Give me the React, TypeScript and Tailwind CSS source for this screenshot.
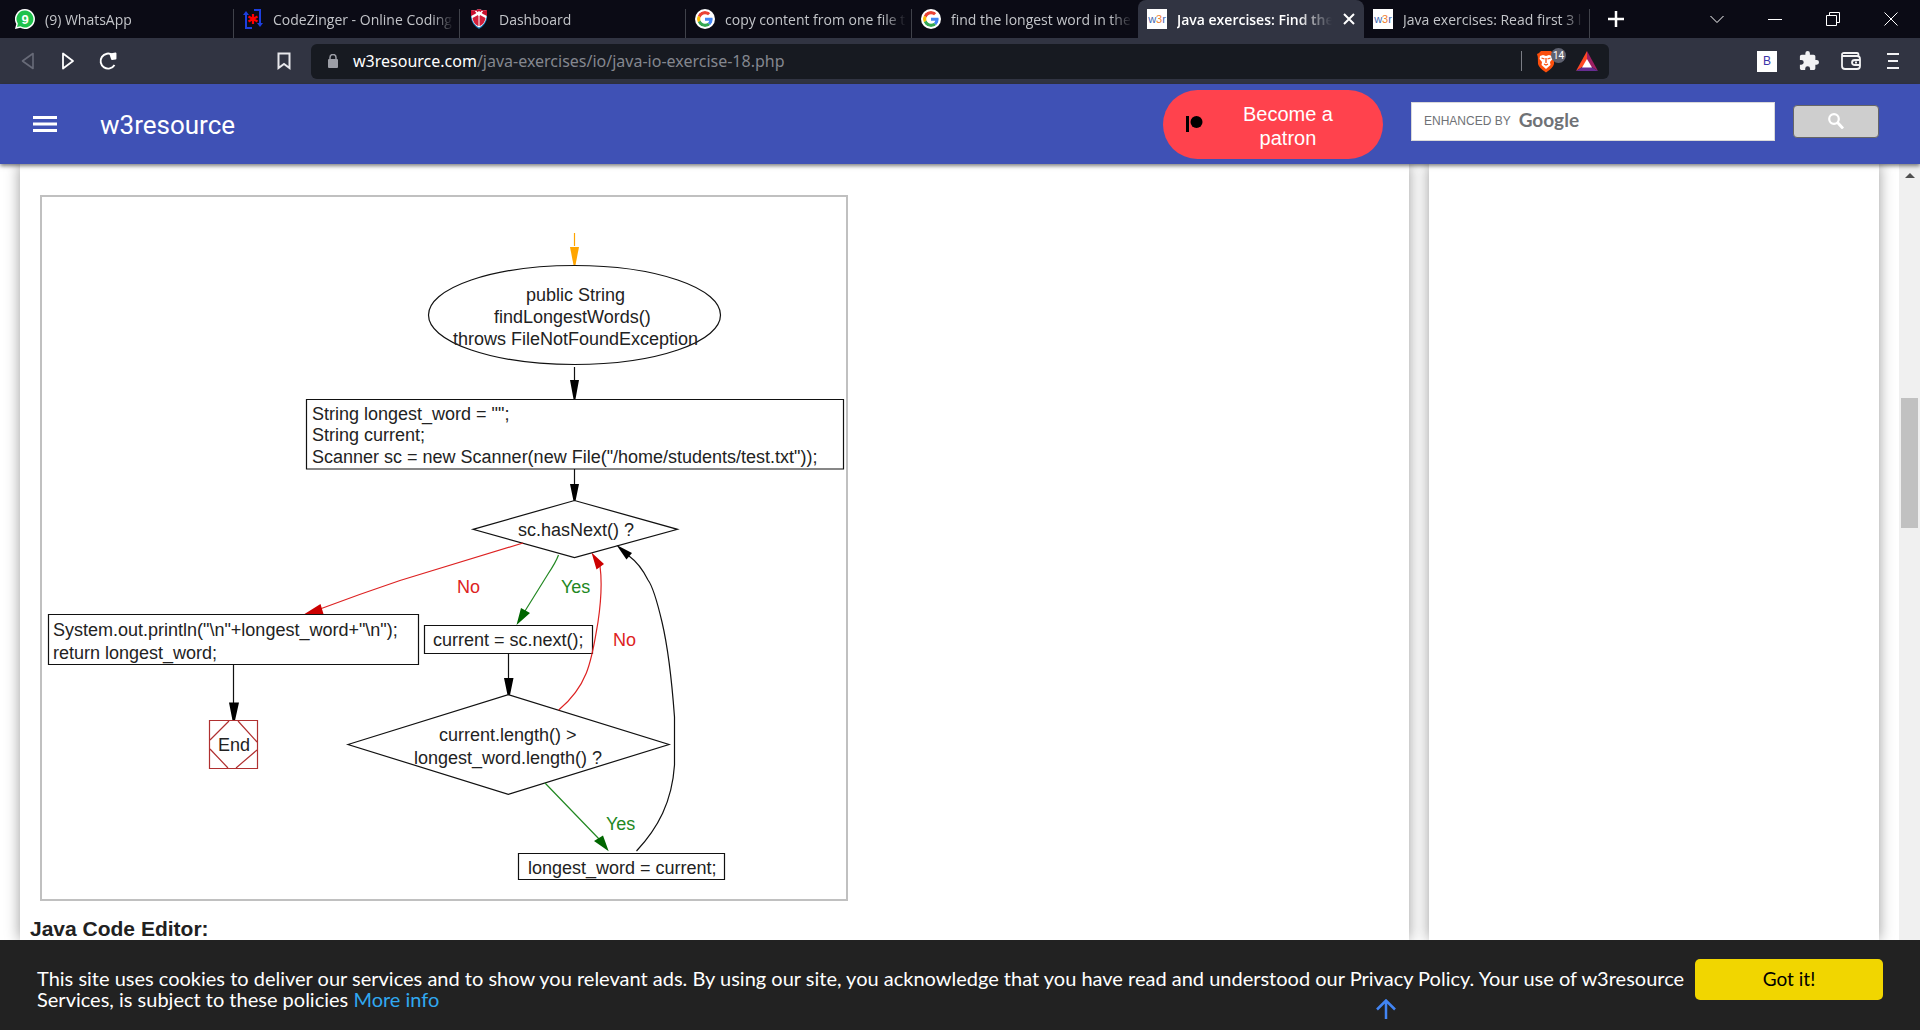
import React from "react";

const UI = "font-['Open_Sans','Noto_Sans',sans-serif]";

function Google() {
  return (
    <svg viewBox="0 0 48 48" className="size-5 shrink-0 rounded-full bg-white p-0.5">
      <path fill="#EA4335" d="M24 9.5c3.5 0 6.700 1.200 9.200 3.600l6.900-6.900C35.900 2.400 30.500 0 24 0 14.600 0 6.500 5.400 2.600 13.200l8 6.200C12.400 13.700 17.700 9.500 24 9.500z" />
      <path fill="#4285F4" d="M47 24.500c0-1.600-.2-3.100-.4-4.500H24v9h12.900c-.6 3-2.300 5.500-4.800 7.200l7.700 6C44.400 38 47 31.800 47 24.500z" />
      <path fill="#FBBC05" d="M10.500 28.600A14.500 14.500 0 0 1 10.500 19.400l-8-6.200a24 24 0 0 0 0 21.600l8-6.200z" />
      <path fill="#34A853" d="M24 48c6.500 0 11.900-2.100 15.900-5.800l-7.700-6c-2.200 1.500-4.900 2.300-8.200 2.300-6.300 0-11.600-4.200-13.500-9.900l-8 6.200C6.500 42.600 14.600 48 24 48z" />
    </svg>
  );
}

function WhatsApp() {
  return (
    <svg viewBox="0 0 20 20" className="size-5 shrink-0">
      <path d="M10 0a10 10 0 1 1-4.800 18.800L0 20l1.300-5A10 10 0 0 1 10 0z" fill="#fff" />
      <path d="M10 1.500a8.500 8.500 0 1 1-4.600 15.700L2 18l.9-3.300A8.500 8.500 0 0 1 10 1.500z" fill="#1fc24c" />
      <text x="10" y="14.500" textAnchor="middle" fontSize="13" fontWeight="bold" fill="#fff" fontFamily="Liberation Sans, sans-serif">9</text>
    </svg>
  );
}

function CodeZinger() {
  return (
    <svg viewBox="0 0 20 20" className="size-5 shrink-0" fill="none" strokeWidth="2">
      <path d="M9 19H3V5M11 1h6v14" stroke="#1d3fe0" />
      <path d="M0 6l3-4 3 4zM14 14l3 4 3-4z" fill="#1d3fe0" />
      <path d="M10 5v10M5.500 7.500l9 5M14.500 7.500l-9 5" stroke="#f00" strokeWidth="2.200" />
    </svg>
  );
}

function Shield() {
  return (
    <svg viewBox="0 0 20 20" className="size-5 shrink-0">
      <path d="M2 1q4 1 8-1 4 2 8 1v8q-1 7-8 11-7-4-8-11z" fill="#1878b8" />
      <path d="M2.500 1q4 1 7.500-1 4 2 7.500 1v7q-1 7-7.500 10.500Q3.500 15 2.500 8z" fill="#fff" />
      <path d="M2 1q4 1 8-1 4 2 8 1v6l-4-2-4-3-4 3-4 2z" fill="#c8102e" />
      <path d="M3.500 9L9 6v11q-5-3-5.500-8zM16.500 9L11 6v11q5-3 5.500-8z" fill="#d11f3a" />
      <path d="M10 6v11" stroke="#d11f3a" />
      <path d="M6.500 2L10 5.500 13.500 2M10 4v3" stroke="#fff" strokeWidth="1.500" fill="none" />
    </svg>
  );
}

function W3r() {
  return (
    <span className="flex size-5 shrink-0 items-center justify-center bg-white font-['Liberation_Sans',sans-serif] text-[11px] font-normal text-[#4267b2]">
      w<span className="text-[#f08030]">3</span>r
    </span>
  );
}

type TabProps = { icon: React.ReactNode; title: string; active?: boolean; first?: boolean; beforeActive?: boolean };

function Tab({ icon, title, active, first, beforeActive }: TabProps) {
  const base = "relative flex items-center gap-2.5 text-[14px] whitespace-nowrap h-[38px] shrink min-w-0 ";
  const size = first ? "w-[234px] pl-[15px] " : "w-[226px] pl-[9px] ";
  return (
    <div className={base + size + (active ? "rounded-t-lg bg-[#313442] font-semibold text-white" : "text-[#c3c5c9]")}>
      {icon}
      <button
        className={
          "min-w-0 flex-1 overflow-hidden text-left whitespace-nowrap " +
          (active
            ? "[mask-image:linear-gradient(to_right,#000_78%,transparent)]"
            : "mr-1.5 [mask-image:linear-gradient(to_right,#000_88%,transparent)]")
        }
      >
        {title}
      </button>
      {active && (
        <button aria-label="Close tab" className="mr-2 shrink-0">
          <svg viewBox="0 0 14 14" className="size-3.5" stroke="#fff" strokeWidth="2"><path d="M2 2l10 10M12 2L2 12" /></svg>
        </button>
      )}
      {!active && !beforeActive && <span className="absolute right-0 bottom-0 h-[29px] w-px bg-[#40424a]" />}
    </div>
  );
}

function TabStrip() {
  return (
    <div className="flex h-[38px] items-center bg-[#0b0b15]">
      <Tab first icon={<WhatsApp />} title="(9) WhatsApp" />
      <Tab icon={<CodeZinger />} title="CodeZinger - Online Coding" />
      <Tab icon={<Shield />} title="Dashboard" />
      <Tab icon={<Google />} title="copy content from one file t" />
      <Tab beforeActive icon={<Google />} title="find the longest word in the" />
      <Tab active icon={<W3r />} title="Java exercises: Find the" />
      <Tab icon={<W3r />} title="Java exercises: Read first 3 l" />
      <button aria-label="New tab" className="ml-[18px]">
        <svg viewBox="0 0 16 16" className="size-4" stroke="#fff" strokeWidth="2.500"><path d="M8 0v16M0 8h16" /></svg>
      </button>
      <div className="ml-auto flex items-center gap-11 pr-[22px]">
        <button aria-label="Search tabs">
          <svg viewBox="0 0 14 14" className="size-3.5" fill="none" stroke="#fff"><path d="M.5 4L7 10.500 13.500 4" /></svg>
        </button>
        <button aria-label="Minimize">
          <svg viewBox="0 0 14 14" className="size-3.5" stroke="#fff"><path d="M0 7.500h14" /></svg>
        </button>
        <button aria-label="Restore">
          <svg viewBox="0 0 14 14" className="size-3.5" fill="none" stroke="#fff"><path d="M.5 3.500h10v10H.5zM3.500 3.500v-3h10v10h-3" /></svg>
        </button>
        <button aria-label="Close">
          <svg viewBox="0 0 14 14" className="size-3.5" stroke="#fff"><path d="M.5.5l13 13M13.500.5l-13 13" /></svg>
        </button>
      </div>
    </div>
  );
}

function Toolbar() {
  return (
    <div className="flex h-[46px] items-center bg-[#313442]">
      <div className="flex w-[311px] shrink-0 items-center">
        <button aria-label="Back" className="ml-[21px]">
          <svg viewBox="0 0 14 18" className="h-[18px] w-3.5" fill="none" stroke="#686b78" strokeWidth="1.600" strokeLinejoin="round"><path d="M12 1.500v15L1.500 9z" /></svg>
        </button>
        <button aria-label="Forward" className="ml-[26px]">
          <svg viewBox="0 0 14 18" className="h-[18px] w-3.5" fill="none" stroke="#fff" strokeWidth="1.800" strokeLinejoin="round"><path d="M2 1.500v15L12 9z" /></svg>
        </button>
        <button aria-label="Reload" className="ml-[23px]">
          <svg viewBox="0 0 20 20" className="size-5" fill="none" stroke="#fff" strokeWidth="1.900"><path d="M16.500 14A7.500 7.500 0 1 1 14.500 4" /><path d="M12.500 3.500l5-1v5l-3.500.5z" fill="#fff" strokeLinejoin="round" /></svg>
        </button>
        <button aria-label="Bookmark" className="mr-5 ml-auto">
          <svg viewBox="0 0 14 18" className="h-[18px] w-3.5" fill="none" stroke="#e8e8ec" strokeWidth="2"><path d="M1.500 1.500h11v14.500L7 12l-5.500 4z" /></svg>
        </button>
      </div>
      <div className="flex h-[35px] min-w-0 flex-1 items-center rounded-md bg-[#171a21] pr-[11px] pl-4">
        <svg viewBox="0 0 12 14" className="h-3.5 w-3 shrink-0"><rect x="1" y="5" width="10" height="9" rx="1" fill="#9c9ea6" /><path d="M3 6V3.500a3 3 0 0 1 6 0V6" fill="none" stroke="#9c9ea6" strokeWidth="1.500" /></svg>
        <button aria-label="Address" className="ml-3.5 font-['Noto_Sans',sans-serif] text-[16px] text-[#84878f]">
          <span className="text-white">w3resource.com</span>/java-exercises/io/java-io-exercise-18.php
        </button>
        <span className="mr-[14px] ml-auto h-5 w-px bg-[#7b7d85]" />
        <button aria-label="Brave Shields" className="relative mr-2.5 w-[30px]">
          <svg viewBox="0 0 20 23" className="h-[23px] w-5">
            <path d="M5 1h10l2 2 2 1-.8 3L18 14q-1 4-8 8.500Q3 18 2 14L1.800 7 1 4l2-1z" fill="#fb4e0b" />
            <path d="M4 6l3-1 3 1 3-1 3 1 .5 3-2.500 3 .5 3-4.500 4-4.500-4 .5-3L3.500 9z" fill="#fff" />
            <path d="M5.500 8l3 1M14.500 8l-3 1M10 8v5M8 14l2 1 2-1" stroke="#fb4e0b" strokeWidth="1.300" fill="none" />
          </svg>
          <span className="absolute -top-0.5 right-0 flex h-[15px] w-[15px] items-center justify-center rounded-full bg-[#5f6270] font-['Roboto',sans-serif] text-[10px] text-white">14</span>
        </button>
        <button aria-label="Rewards">
          <svg viewBox="0 0 22 20" className="h-5 w-[22px]">
            <path d="M11 0L0 20l11-7z" fill="#ff4724" /><path d="M11 0l11 20-11-7z" fill="#9e1f63" /><path d="M0 20h22l-11-7z" fill="#662d91" /><path d="M11 8l5 8.500H6z" fill="#fff" />
          </svg>
        </button>
      </div>
      <div className="flex w-[311px] shrink-0 items-center justify-end gap-[22px] pr-[21px]">
        <button aria-label="B extension" className="flex h-[21px] w-5 items-center justify-center bg-white font-['Liberation_Sans',sans-serif] text-[12px] text-[#3b35a8]">B</button>
        <button aria-label="Extensions">
          <svg viewBox="1 1 22 22" className="size-5" fill="#f2f2f4"><path d="M20.500 11H19V7c0-1.100-.9-2-2-2h-4V3.500a2.500 2.500 0 0 0-5 0V5H4c-1.100 0-2 .9-2 2v3.800h1.500a2.700 2.700 0 0 1 0 5.400H2V20c0 1.100.9 2 2 2h3.800v-1.500a2.700 2.700 0 0 1 5.400 0V22H17c1.100 0 2-.9 2-2v-4h1.500a2.500 2.500 0 0 0 0-5z" /></svg>
        </button>
        <button aria-label="Wallet">
          <svg viewBox="0 0 20 18" className="h-[18px] w-5" fill="none" stroke="#f2f2f4" strokeWidth="1.800"><path d="M1 3.500V14q0 3 3 3h12q3 0 3-3V7q0-3-3-3H3Q1 4 1 2.500T3 1h13q1.500 0 1.500 2v1M19 8h-5q-3 0-3 2.500T14 13h5" /><path d="M14 10.500h2" /></svg>
        </button>
        <button aria-label="Menu" className="ml-1">
          <svg viewBox="0 0 12 18" className="h-[18px] w-3" stroke="#f2f2f4" strokeWidth="2"><path d="M0 2h12M1 9h10M0 16h12" /></svg>
        </button>
      </div>
    </div>
  );
}

function SiteHeader() {
  return (
    <header className="relative z-10 flex h-20 items-center bg-[#3f51b5] shadow-[0_2px_4px_rgba(0,0,0,0.5)]">
      <button aria-label="Open menu" className="ml-[33px]">
        <svg viewBox="0 0 24 18" className="h-[18px] w-6" fill="#fff"><path d="M0 1h24v3H0zM0 7.500h24v3H0zM0 14h24v3H0z" /></svg>
      </button>
      <a href="#" className="ml-[43px] pt-0.5 font-['Roboto',sans-serif] text-[26px] text-white">w3resource</a>
      <a href="#patron" className="ml-auto flex h-[69px] w-[220px] items-center rounded-full bg-[#ff424d] pr-[50px] pl-[23px]">
        <svg viewBox="0 0 17 16" className="h-4 w-[17px]"><rect width="3" height="16" /><circle cx="10.500" cy="6" r="6" /></svg>
        <span className="ml-auto pt-1 text-center font-['Liberation_Sans',sans-serif] text-[20px] leading-6 text-white">Become a<br />patron</span>
      </a>
      <label className="relative mb-1.5 ml-7 block h-[39px] w-[364px]">
        <input type="text" aria-label="Search" className="h-full w-full border border-[#d9d9d9] bg-white px-3 outline-none" />
        <span className="pointer-events-none absolute inset-y-0 left-[13px] flex items-center gap-2 font-['Liberation_Sans',sans-serif] text-[12px] text-[#6f7276]">
          ENHANCED BY <span className="pb-0.5 font-['Lato',sans-serif] text-[19px] font-bold">Google</span>
        </span>
      </label>
      <button aria-label="Search" className="mr-[41px] mb-1.5 ml-[18px] flex h-[33px] w-[86px] items-center justify-center rounded-sm border border-[#666] bg-[#cecece]">
        <svg viewBox="0 0 16 16" className="size-4" fill="none" stroke="#fff" strokeWidth="2.200"><circle cx="6" cy="6" r="4.800" /><path d="M9.500 9.500L15 15.500" strokeWidth="2.800" /></svg>
      </button>
    </header>
  );
}

function Flowchart() {
  return (
    <figure className="w-[808px] border-2 border-[#c0c0c0] bg-white">
      <svg viewBox="42 197 804 702" className="block w-full" fill="none" stroke="#111" strokeWidth="1.200" fontFamily="Liberation Sans, Arial, sans-serif" fontSize="18">
        <path d="M574.500 233v13" stroke="orange" />
        <path d="M570 247h9l-3.500 18h-2z" fill="orange" stroke="none" />
        <ellipse cx="574.500" cy="315" rx="146" ry="49.500" />
        <path d="M574.500 367v15M574.500 469v16M508.500 653v26M233.500 664v40" />
        <path d="M570 380h9l-3.500 19h-2zM570 484h9l-3.500 17h-2zM504 678h9.500l-3.500 17h-2.500zM229 702.500h10l-4 18h-2.500z" fill="#000" stroke="none" />
        <path d="M306.500 399.500h537v69.500h-537zM48.500 614.500h370v50h-370zM424.500 625.500h168v28h-168zM518.500 853.500h206v26h-206z" />
        <path d="M473 529.300L574.500 500.500 677.500 529.300 574.500 557.700zM348 744.500L508.300 694.700 669 744.500 508.300 794.300z" />
        <path d="M209.500 720.500h48v48h-48zM210 740l19-19M238 721l19 21M210 749l18 19M236 768l21-18" stroke="#b03030" />
        <path d="M523 543L400 580.500Q360 594 320 609M558.700 710C590 684 592 656 598 622Q603 588 600 566" stroke="#d22" />
        <path d="M304.500 614l16-10 3 10zM591.500 552.500l12.500 11.500-7.500 5.500z" fill="#c00" stroke="none" />
        <path d="M558.500 555Q556 562 548 574L525 611M545 783L600 840" stroke="#282" />
        <path d="M516.500 625l4.500-17 9 5zM608.700 851.300L594 841l9-5.500z" fill="#060" stroke="none" />
        <path d="M636.500 851C658 828 672 802 674.500 765V717Q670 656 662 622T648 580Q640 564 629 556" />
        <path d="M616.500 545l15.500 8-5.500 6.500z" fill="#000" stroke="none" />
        <g fill="#222" stroke="none">
          <text x="526" y="301">public String</text>
          <text x="494" y="323">findLongestWords()</text>
          <text x="453" y="345">throws FileNotFoundException</text>
          <text x="312" y="420">String longest_word = "";</text>
          <text x="312" y="441">String current;</text>
          <text x="312" y="463">Scanner sc = new Scanner(new File("/home/students/test.txt"));</text>
          <text x="518" y="536">sc.hasNext() ?</text>
          <text x="53" y="636">System.out.println("\n"+longest_word+"\n");</text>
          <text x="53" y="659">return longest_word;</text>
          <text x="433" y="646">current = sc.next();</text>
          <text x="218" y="751">End</text>
          <text x="439" y="741">current.length() &gt;</text>
          <text x="414" y="764">longest_word.length() ?</text>
          <text x="528" y="874">longest_word = current;</text>
        </g>
        <g fill="#d22" stroke="none"><text x="457" y="593">No</text><text x="613" y="646">No</text></g>
        <g fill="#282" stroke="none"><text x="561" y="593">Yes</text><text x="606" y="830">Yes</text></g>
      </svg>
    </figure>
  );
}

function CookieBar() {
  return (
    <div className="relative z-20 flex h-[90px] shrink-0 items-center bg-[#222] pr-[37px] pl-[37px] font-['Lato',sans-serif]">
      <p className="flex-1 pt-2 text-[20px] leading-[21px] text-white">
        This site uses cookies to deliver our services and to show you relevant ads. By using our site, you acknowledge that you have read and understood our Privacy Policy. Your use of w3resource Services, is subject to these policies <a href="#policy" className="text-[#31a8f0]">More info</a>
      </p>
      <button className="mb-3 ml-2 h-[41px] w-[188px] shrink-0 rounded-[5px] bg-[#f1d600] text-[19px] text-black">Got it!</button>
      <a href="#top" aria-label="Back to top" className="absolute bottom-[11px] left-[1376px]">
        <svg viewBox="0 0 20 20" className="size-5" fill="none" stroke="#4285f4" strokeWidth="2.500"><path d="M10 20V2M1 10.500L10 1.500l9 9" /></svg>
      </a>
    </div>
  );
}

export default function App() {
  return (
    <div className={"flex h-screen flex-col overflow-hidden bg-white " + UI}>
      <TabStrip />
      <Toolbar />
      <SiteHeader />
      <div className="flex min-h-0 flex-1">
        <div className="flex min-w-0 flex-1 gap-5 overflow-hidden px-5">
          <main className="min-w-0 flex-1 bg-white px-5 pt-[31px] shadow-[0_0_14px_rgba(0,0,0,0.4)]">
            <Flowchart />
            <h2 className="mt-4 -ml-2.5 font-['Liberation_Sans',sans-serif] text-[21px] leading-6 font-bold text-[#212121]">Java Code Editor:</h2>
          </main>
          <aside className="w-[450px] shrink-0 bg-white shadow-[0_0_14px_rgba(0,0,0,0.4)]" />
        </div>
        <div className="flex w-[21px] shrink-0 flex-col items-center bg-[#f0f0f0] pt-[9px]">
          <svg viewBox="0 0 10 5" className="h-[5px] w-2.5" fill="#505050"><path d="M0 5l5-5 5 5z" /></svg>
          <div className="mt-[220px] h-[130px] w-[17px] bg-[#c1c1c1]" />
        </div>
      </div>
      <CookieBar />
    </div>
  );
}
